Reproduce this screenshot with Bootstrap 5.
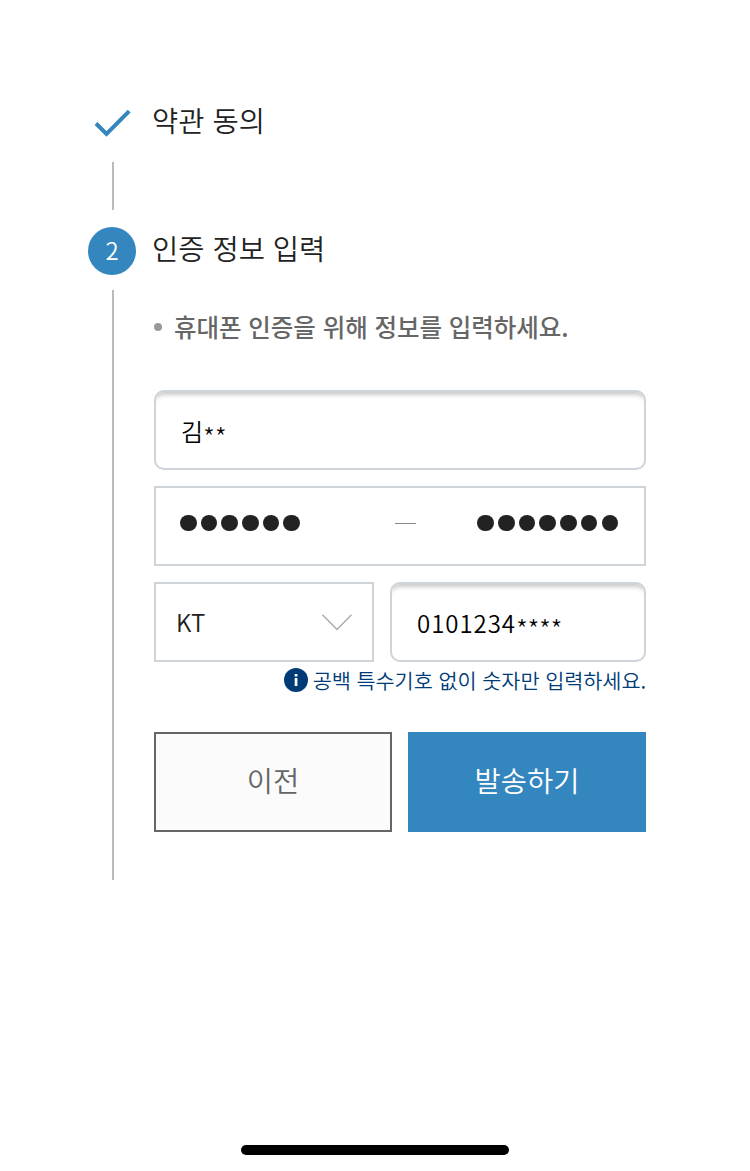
<!DOCTYPE html>
<html lang="ko">
<head>
<meta charset="utf-8">
<meta name="viewport" content="width=device-width, initial-scale=1">
<title>인증 정보 입력</title>
<link href="https://cdn.jsdelivr.net/npm/bootstrap@5.3.0/dist/css/bootstrap.min.css" rel="stylesheet">
<style>
body{font-family:"Noto Sans CJK KR",sans-serif;color:#222;background:#fff}
.page{min-height:1171px;padding:98px 104px 0 88px}
.rail{width:50px;flex:none}
.mark-box{width:48px;height:48px;flex:none}
.mark-num{background:#3486be;color:#fff;font-size:24px;font-weight:350;border-radius:50%;line-height:46px}
.rail-line{width:2px;background:#bbb}
.step-title{font-size:28.5px;font-weight:350;line-height:48px;margin:-2px 0 0 -2px;white-space:nowrap}
.step-two .step-title{margin-top:-3px}
.step-body{margin-left:16px;min-width:0}
.step-one{height:129px}
.step-two{height:653px}
.guide{font-size:24.5px;font-weight:500;color:#666;line-height:36px;margin:37px 0 45px;letter-spacing:-.04px;white-space:nowrap}
.guide i{width:8px;height:8px;border-radius:50%;background:#999;margin-right:12px}
.field{height:80px;border:2px solid #ced4da;border-radius:0;background:#fff;font-size:24px;padding:0 20px;line-height:1.5;color:#222;box-shadow:none}
.field-text{border-radius:10px;padding:2px 25px 0;color:#000;font-weight:350;box-shadow:inset 0 7px 4px -4px #ccc}
.stars{font-size:27px;font-weight:300;letter-spacing:-.4px;line-height:1;transform:translateY(5px)}
.digits{letter-spacing:.95px}
.pin{padding:0 26px 6px 24px}
.pin span{gap:4.2px;flex:none}
.pin i{width:16.5px;height:16.5px;border-radius:50%;background:#222}
.pin svg{margin-left:95px}
.carrier{width:220px;flex:none;font-weight:350}
.hint{font-size:20.8px;font-weight:350;color:#003b77;line-height:30px;margin-top:3px;letter-spacing:-.08px;white-space:nowrap}
.hint svg{margin-right:5px}
.act{height:100px;border-radius:0;font-size:28.5px;font-weight:350;border:2px solid #666;padding:0 0 4px}
.act-prev{background:#fbfbfb;color:#666}
.act-send{background:#3486be;border-color:#3486be;color:#fff}
.home-bar{width:268px;height:10px;bottom:16px;left:241px;background:#000}
</style>
</head>
<body>
<main class="page position-relative">
  <section class="d-flex step-one">
    <div class="rail d-flex flex-column align-items-center">
      <div class="mark-box d-flex">
        <svg width="48" height="48" viewBox="0 0 48 48" fill="none" stroke="#3486be" stroke-width="4"><path d="M7 25.5 17.5 36 40.2 13.2"/></svg>
      </div>
      <div class="rail-line mt-3" style="height:48px"></div>
    </div>
    <div class="step-body flex-grow-1"><h2 class="step-title">약관 동의</h2></div>
  </section>
  <section class="d-flex step-two">
    <div class="rail d-flex flex-column align-items-center">
      <div class="mark-box mark-num text-center align-self-start">2</div>
      <div class="rail-line flex-grow-1" style="margin-top:15px"></div>
    </div>
    <div class="step-body flex-grow-1">
      <h2 class="step-title">인증 정보 입력</h2>
      <p class="guide d-flex align-items-center"><i></i><span>휴대폰 인증을 위해 정보를 입력하세요.</span></p>
      <div class="d-flex flex-column gap-3">
        <div class="form-control field field-text d-flex align-items-center"><span>김</span><span class="stars">**</span></div>
        <div class="form-control field d-flex align-items-center pin">
          <span class="d-flex"><i></i><i></i><i></i><i></i><i></i><i></i></span>
          <svg width="21" height="2"><path d="M0 1.5H21" stroke="#888" stroke-width="1"/></svg>
          <span class="d-flex ms-auto"><i></i><i></i><i></i><i></i><i></i><i></i><i></i></span>
        </div>
        <div class="d-flex gap-3">
          <div class="form-control field carrier d-flex align-items-center justify-content-between"><span>KT</span>
            <svg width="30" height="17" viewBox="0 0 30 17" fill="none" stroke="#aaa" stroke-width="1.4"><path d="M.5.7 15 15.5 29.5.7"/></svg>
          </div>
          <div class="form-control field field-text d-flex align-items-center"><span class="digits">0101234</span><span class="stars">****</span></div>
        </div>
      </div>
      <p class="hint d-flex align-items-center justify-content-end mb-0">
        <svg width="24" height="24" viewBox="0 0 24 24"><circle cx="12" cy="12" r="12" fill="#003b77"/><path d="M10.7 6h2.7v2.4h-2.7zM10.7 10h2.7v8h-2.7z" fill="#fff"/></svg>
        <span>공백 특수기호 없이 숫자만 입력하세요.</span>
      </p>
      <div class="d-flex gap-3" style="margin-top:37px">
        <button class="btn act act-prev flex-fill w-50">이전</button>
        <button class="btn act act-send flex-fill w-50">발송하기</button>
      </div>
    </div>
  </section>
  <div class="home-bar position-absolute rounded-pill"></div>
</main>
<script src="https://cdn.jsdelivr.net/npm/bootstrap@5.3.0/dist/js/bootstrap.bundle.min.js"></script>
</body>
</html>
